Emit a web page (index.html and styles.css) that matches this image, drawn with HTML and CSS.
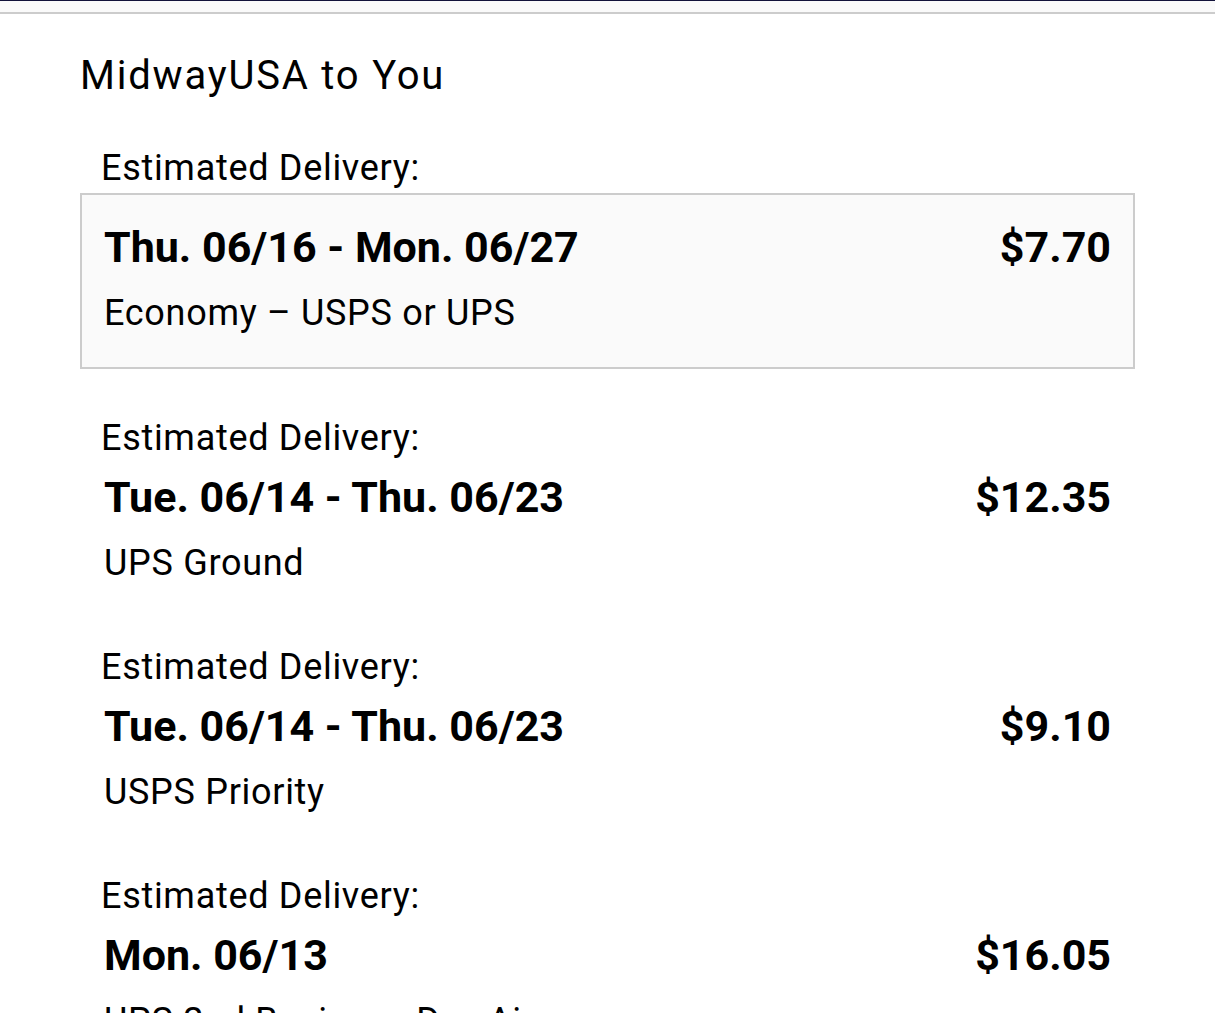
FILE: index.html
```html
<!DOCTYPE html>
<html lang="en">

<head>
    <meta charset="UTF-8">
    <meta name="viewport" content="width=device-width, initial-scale=1.0">
    <title>Shipping Options</title>
    <link rel="stylesheet" href="styles.css">
</head>

<body>
    <!-- Top bar -->
    <div class="top-bar"></div>

    <div class="container">
        <h2 class="section-title">MidwayUSA to You</h2>

        <!-- Shipping options -->
        <div class="option current">
            <div class="option-label">Estimated Delivery:</div>
            <div class="option-card selected">
                <div class="option-row">
                    <span class="option-date">Thu. 06/16 - Mon. 06/27</span>
                    <span class="option-price">$7.70</span>
                </div>
                <div class="option-method">Economy – USPS or UPS</div>
            </div>
        </div>

        <div class="option">
            <div class="option-label">Estimated Delivery:</div>
            <div class="option-card">
                <div class="option-row">
                    <span class="option-date">Tue. 06/14 - Thu. 06/23</span>
                    <span class="option-price">$12.35</span>
                </div>
                <div class="option-method">UPS Ground</div>
            </div>
        </div>

        <div class="option">
            <div class="option-label">Estimated Delivery:</div>
            <div class="option-card">
                <div class="option-row">
                    <span class="option-date">Tue. 06/14 - Thu. 06/23</span>
                    <span class="option-price">$9.10</span>
                </div>
                <div class="option-method">USPS Priority</div>
            </div>
        </div>

        <div class="option">
            <div class="option-label">Estimated Delivery:</div>
            <div class="option-card">
                <div class="option-row">
                    <span class="option-date">Mon. 06/13</span>
                    <span class="option-price">$16.05</span>
                </div>
                <div class="option-method">UPS 2nd Business Day Air</div>
            </div>
        </div>
    </div>
</body>

</html>
```

FILE: styles.css
```css
body {
    font-family: Roboto, "Noto Sans", sans-serif;
    margin: 0;
    background-color: #ffffff;
    color: #000000;
    overflow: hidden;
}

.top-bar {
    height: 11px;
    background-color: #fafafa;
    border-top: 1px solid #12123a;
    border-bottom: 2px solid #cccccc;
}

.container {
    padding: 0 80px;
}

.section-title {
    font-size: 40px;
    font-weight: normal;
    line-height: 48px;
    letter-spacing: 1.8px;
    margin: 38px 0 44px;
}

.option {
    margin-bottom: 48px;
}

.option.current {
    margin-bottom: 45px;
}

.option-label {
    font-size: 36px;
    line-height: 44px;
    letter-spacing: 0.7px;
    padding: 2px 0 0 21px;
}

.option-card {
    margin-top: 3px;
    border: 2px solid transparent;
    padding: 8px 22px 8px;
}

.option-card.selected {
    border-color: #cccccc;
    background-color: #fafafa;
    padding: 28px 22px 32px;
}

.option-row {
    display: flex;
    justify-content: space-between;
    align-items: baseline;
}

.option-date,
.option-price {
    font-size: 43px;
    font-weight: bold;
    line-height: 48px;
}

.option-method {
    font-size: 36px;
    line-height: 44px;
    letter-spacing: 0.7px;
    margin-top: 20px;
}
```
